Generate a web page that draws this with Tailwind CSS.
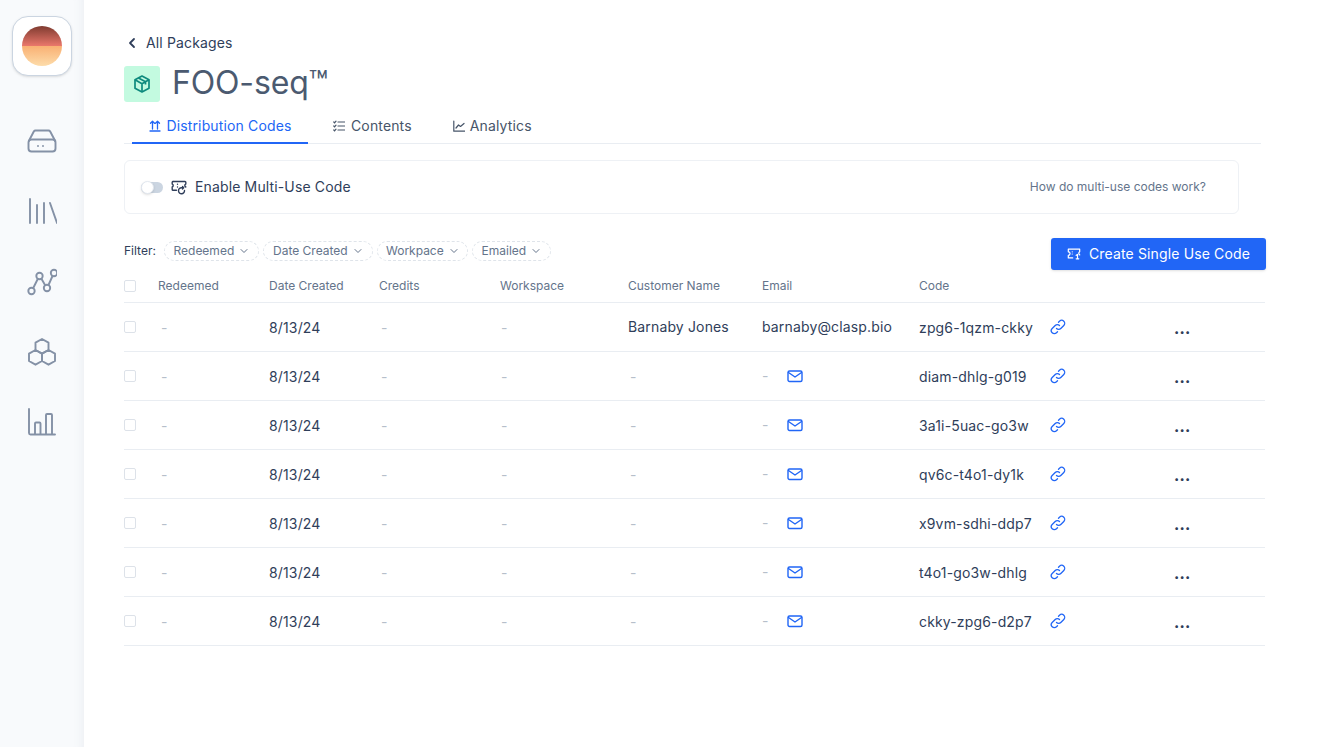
<!DOCTYPE html>
<html lang="en">
<head>
<meta charset="UTF-8">
<meta name="viewport" content="width=device-width, initial-scale=1.0">
<title>FOO-seq Distribution Codes</title>
<script src="https://cdn.jsdelivr.net/npm/@tailwindcss/browser@4"></script>
</head>
<body class="bg-white font-['Inter',sans-serif] text-[#2f3e5a] overflow-hidden">
<div class="flex h-[747px] w-[1320px]">

  <!-- sidebar -->
  <aside class="w-[84px] shrink-0 bg-[#f8fafc] shadow-[inset_-10px_0_10px_-8px_rgba(100,116,139,0.08)] flex flex-col items-center pt-4">
    <div class="w-[60px] h-[60px] rounded-[16px] bg-white border border-[#cbd5e1] shadow-sm flex items-center justify-center">
      <div class="w-10 h-10 rounded-full bg-[linear-gradient(#7f3b30_0%,#e8766a_49%,#f9b073_50%,#fddcaa_100%)]"></div>
    </div>
    <svg class="mt-[50px] w-[30px] h-[30px] text-[#8491a6]" viewBox="0 0 30 30" fill="none" stroke="currentColor" stroke-width="1.9" stroke-linecap="round" stroke-linejoin="round"><path d="M1.5 16.5v6a3 3 0 0 0 3 3h21a3 3 0 0 0 3-3v-6a3 3 0 0 0-3-3h-21a3 3 0 0 0-3 3z"/><path d="M1.8 15l5-9.500a2 2 0 0 1 1.800-1h12.800a2 2 0 0 1 1.800 1l5 9.500"/><path d="M11 20h.01M16 20h.01"/></svg>
    <svg class="mt-10 w-[30px] h-[30px] text-[#8491a6]" viewBox="0 0 30 30" fill="none" stroke="currentColor" stroke-width="1.9" stroke-linecap="round"><path d="M3 3v24M10 9v18M17 7v20M23 7l7 20"/></svg>
    <svg class="mt-10 w-[30px] h-[30px] text-[#8491a6]" viewBox="0 0 30 30" fill="none" stroke="currentColor" stroke-width="1.9"><circle cx="4.500" cy="25" r="3.200"/><circle cx="12.500" cy="10" r="3.200"/><circle cx="20" cy="22" r="3.200"/><circle cx="27" cy="7" r="3.200"/><path d="M6 22.500l5-10M14.300 12.500l4 7M21.500 19l4-9"/></svg>
    <svg class="mt-10 w-[30px] h-[30px] text-[#8491a6]" viewBox="0 0 30 30" fill="none" stroke="currentColor" stroke-width="1.900" stroke-linejoin="round"><path d="M15 3l6.500 3.700v7.300L15 17.700 8.500 14V6.700z"/><path d="M8.500 14l6.500 3.700v7.300l-6.500 3.700L2 25v-7.300z"/><path d="M21.500 14l6.500 3.700V25l-6.500 3.700L15 25v-7.300z"/></svg>
    <svg class="mt-10 w-[30px] h-[30px] text-[#8491a6]" viewBox="0 0 30 30" fill="none" stroke="currentColor" stroke-width="1.900" stroke-linecap="round" stroke-linejoin="round"><path d="M2 3v24a1.500 1.500 0 0 0 1.500 1.500H28"/><path d="M8 28V17.500a1 1 0 0 1 1-1h3.500a1 1 0 0 1 1 1V28"/><path d="M19 28V9a1 1 0 0 1 1-1h4a1 1 0 0 1 1 1v19"/></svg>
  </aside>

  <!-- main -->
  <main class="flex-1 pl-10 pt-[33px]">
    <a class="flex items-center h-5 text-sm tracking-[0.01em]">
      <svg class="w-4 h-4 mr-[6px]" viewBox="0 0 16 16" fill="none" stroke="currentColor" stroke-width="1.800" stroke-linecap="round" stroke-linejoin="round"><path d="M10 4L6 8l4 4"/></svg>
      All Packages
    </a>
    <div class="flex items-center mt-[13px] h-9">
      <div class="w-9 h-9 rounded-[3px] bg-[#c3fae0] flex items-center justify-center">
        <svg class="w-5 h-5 text-[#0f8a7e]" viewBox="0 0 20 20" fill="none" stroke="currentColor" stroke-width="1.700" stroke-linejoin="round"><path d="M10 2l7 3.800v8.400L10 18l-7-3.800V5.800z"/><path d="M3 5.800L10 9.700l7-3.900M10 9.700V18M6.500 3.900l7 3.900v2.700"/></svg>
      </div>
      <h1 class="ml-3 -mt-[2px] text-[32px] leading-9 tracking-[-0.005em] text-[#4b5a70]">FOO-seq™</h1>
    </div>

    <!-- tabs -->
    <div class="mt-[13px] w-[1137px] h-[29px] border-b border-[#e9edf2] flex items-start text-sm tracking-[0.01em]">
      <a class="ml-2 w-[176px] h-[29px] border-b-2 border-[#2166f6] text-[#2166f6] flex items-center justify-center gap-[5px] pl-px pb-[5px]">
        <svg class="w-3 h-3" viewBox="0 0 12 12" fill="none" stroke="currentColor" stroke-width="1.300" stroke-linecap="round" stroke-linejoin="round"><path d="M3.500 9V1.500M1.500 3.300L3.500 1.300l2 2M8.500 9V1.500M6.500 3.300l2-2 2 2M1 11h10"/></svg>
        Distribution Codes
      </a>
      <a class="ml-[25px] h-[28px] pb-[6px] text-[#475569] flex items-center gap-[6px]">
        <svg class="w-3 h-3" viewBox="0 0 12 12" fill="none" stroke="currentColor" stroke-width="1.200" stroke-linecap="round"><path d="M5 2h6.500M5 6h6.500M5 10h6.500M.8 2l.8.800L3 1.200M.8 6l.8.800L3 5.200M.8 10l.8.800L3 9.200"/></svg>
        Contents
      </a>
      <a class="ml-[41px] h-[28px] pb-[6px] text-[#475569] flex items-center gap-[5px]">
        <svg class="w-3 h-3" viewBox="0 0 12 12" fill="none" stroke="currentColor" stroke-width="1.200" stroke-linecap="round" stroke-linejoin="round"><path d="M.8 1v10.200H12M3 8l2.500-3 2 1.500L11 3.500"/></svg>
        Analytics
      </a>
    </div>

    <!-- multi-use panel -->
    <div class="mt-4 w-[1115px] h-[54px] rounded-md border border-[#eef1f5] flex items-center pl-4 pr-8">
      <span class="relative w-[22px] h-[11px] rounded-full bg-[#cbd5e1]">
        <span class="absolute left-0 top-[-1px] w-[13px] h-[13px] rounded-full bg-white border border-[#e2e8f0] shadow-sm"></span>
      </span>
      <svg class="ml-2 w-4 h-4" viewBox="0 0 16 16" fill="none" stroke="currentColor" stroke-width="1.400" stroke-linecap="round" stroke-linejoin="round"><path d="M2 2.500h12c.6 0 .8.400.8.800v1.700c-1.300.3-1.300 2.500 0 3"/><path d="M2 2.500c-.6 0-.8.400-.8.800v1.700c1.300.3 1.300 2.500 0 3v2.500c0 .5.300.8.800.8h3.500"/><path d="M6.500 5.200h.01M6.500 8h.01"/><path d="M13.500 11.500a3 3 0 1 1-3-2.800h2M11.500 7.500l1.200 1.200-1.200 1.200"/></svg>
      <span class="ml-2 text-sm tracking-[0.01em]">Enable Multi-Use Code</span>
      <a class="ml-auto text-xs text-[#64748b]">How do multi-use codes work?</a>
    </div>

    <!-- filters + action -->
    <div class="mt-[27px] w-[1142px] flex items-start justify-between">
      <div class="flex items-center gap-1 h-5 text-xs">
        <span class="mr-1">Filter:</span>
        <span class="w-[95px] h-5 rounded-full border border-dashed border-[#dfe4ea] text-[#64748b] flex items-center justify-center gap-[5px]">Redeemed <svg class="w-2.5 h-2.5" viewBox="0 0 10 10" fill="none" stroke="currentColor" stroke-width="1" stroke-linecap="round" stroke-linejoin="round"><path d="M2 3.500L5 6.500l3-3"/></svg></span>
        <span class="w-[110px] h-5 rounded-full border border-dashed border-[#dfe4ea] text-[#64748b] flex items-center justify-center gap-[5px]">Date Created <svg class="w-2.5 h-2.5" viewBox="0 0 10 10" fill="none" stroke="currentColor" stroke-width="1" stroke-linecap="round" stroke-linejoin="round"><path d="M2 3.500L5 6.500l3-3"/></svg></span>
        <span class="w-[91px] h-5 rounded-full border border-dashed border-[#dfe4ea] text-[#64748b] flex items-center justify-center gap-[5px]">Workpace <svg class="w-2.5 h-2.5" viewBox="0 0 10 10" fill="none" stroke="currentColor" stroke-width="1" stroke-linecap="round" stroke-linejoin="round"><path d="M2 3.500L5 6.500l3-3"/></svg></span>
        <span class="w-[79px] h-5 rounded-full border border-dashed border-[#dfe4ea] text-[#64748b] flex items-center justify-center gap-[5px]">Emailed <svg class="w-2.5 h-2.5" viewBox="0 0 10 10" fill="none" stroke="currentColor" stroke-width="1" stroke-linecap="round" stroke-linejoin="round"><path d="M2 3.500L5 6.500l3-3"/></svg></span>
      </div>
      <button class="w-[215px] h-8 -mt-[3px] rounded-[3px] bg-[#2166f6] text-white text-sm tracking-[0.01em] shadow-sm flex items-center justify-center gap-2">
        <svg class="w-[14px] h-[14px]" viewBox="0 0 16 16" fill="none" stroke="currentColor" stroke-width="1.400" stroke-linecap="round" stroke-linejoin="round"><path d="M1.500 2.500h13v3a2 2 0 0 0 0 3.500M1.500 2.500v3a2 2 0 0 1 0 4v3h5"/><path d="M6 5.500h.01M6 8h.01M10.500 9.500l1.500-1v5M10.500 13.500h3"/></svg>
        Create Single Use Code
      </button>
    </div>

    <!-- table -->
    <div class="w-[1141px]">
      <div class="grid grid-cols-[34px_111px_110px_121px_128px_134px_157px_132px_123px_91px] items-center h-[33px] border-b border-[#e9edf2] text-xs text-[#64748b]">
        <span class="w-3 h-3 rounded-[2px] border border-[#dde2e9]"></span>
        <span>Redeemed</span><span>Date Created</span><span>Credits</span><span>Workspace</span><span>Customer Name</span><span>Email</span><span>Code</span><span></span><span></span>
      </div>

      <div class="grid grid-cols-[34px_111px_110px_121px_128px_134px_157px_132px_123px_91px] items-center h-[49px] border-b border-[#e9edf2] text-sm tracking-[0.15px]">
        <span class="w-3 h-3 rounded-[2px] border border-[#dde2e9]"></span>
        <span class="pl-[3px] pt-px text-[#b6bfcb]">-</span><span class="pt-px">8/13/24</span><span class="pl-[2px] pt-px text-[#b6bfcb]">-</span><span class="pl-px pt-px text-[#b6bfcb]">-</span>
        <span class="-mt-px">Barnaby Jones</span><span class="-mt-px">barnaby@clasp.bio</span><span class="pt-px">zpg6-1qzm-ckky</span>
        <svg class="-ml-px w-4 h-4 text-[#2166f6]" viewBox="0 0 16 16" fill="none" stroke="currentColor" stroke-width="1.300" stroke-linecap="round" stroke-linejoin="round"><path d="M6.500 9.500a3 3 0 0 0 4.300 0l3-3a3 3 0 0 0-4.300-4.300l-1 1"/><path d="M9.500 6.500a3 3 0 0 0-4.300 0l-3 3a3 3 0 0 0 4.300 4.300l1-1"/></svg>
        <span class="font-extrabold text-[15px] pt-1">...</span>
      </div>

      <div class="grid grid-cols-[34px_111px_110px_121px_128px_134px_157px_132px_123px_91px] items-center h-[49px] border-b border-[#e9edf2] text-sm tracking-[0.15px]">
        <span class="w-3 h-3 rounded-[2px] border border-[#dde2e9]"></span>
        <span class="pl-[3px] pt-px text-[#b6bfcb]">-</span><span class="pt-px">8/13/24</span><span class="pl-[2px] pt-px text-[#b6bfcb]">-</span><span class="pl-px pt-px text-[#b6bfcb]">-</span><span class="pl-[2px] pt-px text-[#b6bfcb]">-</span>
        <span class="flex items-center text-[#b6bfcb]">-<svg class="ml-[18px] w-4 h-4 text-[#2166f6]" viewBox="0 0 16 16" fill="none" stroke="currentColor" stroke-width="1.400" stroke-linecap="round" stroke-linejoin="round"><rect x="1" y="3" width="14" height="10.500" rx="1.500"/><path d="M1.500 4.500L8 9l6.500-4.500"/></svg></span>
        <span class="pt-px">diam-dhlg-g019</span>
        <svg class="-ml-px w-4 h-4 text-[#2166f6]" viewBox="0 0 16 16" fill="none" stroke="currentColor" stroke-width="1.300" stroke-linecap="round" stroke-linejoin="round"><path d="M6.500 9.500a3 3 0 0 0 4.300 0l3-3a3 3 0 0 0-4.300-4.300l-1 1"/><path d="M9.500 6.500a3 3 0 0 0-4.300 0l-3 3a3 3 0 0 0 4.300 4.300l1-1"/></svg>
        <span class="font-extrabold text-[15px] pt-1">...</span>
      </div>

      <div class="grid grid-cols-[34px_111px_110px_121px_128px_134px_157px_132px_123px_91px] items-center h-[49px] border-b border-[#e9edf2] text-sm tracking-[0.15px]">
        <span class="w-3 h-3 rounded-[2px] border border-[#dde2e9]"></span>
        <span class="pl-[3px] pt-px text-[#b6bfcb]">-</span><span class="pt-px">8/13/24</span><span class="pl-[2px] pt-px text-[#b6bfcb]">-</span><span class="pl-px pt-px text-[#b6bfcb]">-</span><span class="pl-[2px] pt-px text-[#b6bfcb]">-</span>
        <span class="flex items-center text-[#b6bfcb]">-<svg class="ml-[18px] w-4 h-4 text-[#2166f6]" viewBox="0 0 16 16" fill="none" stroke="currentColor" stroke-width="1.400" stroke-linecap="round" stroke-linejoin="round"><rect x="1" y="3" width="14" height="10.500" rx="1.500"/><path d="M1.500 4.500L8 9l6.500-4.500"/></svg></span>
        <span class="pt-px">3a1i-5uac-go3w</span>
        <svg class="-ml-px w-4 h-4 text-[#2166f6]" viewBox="0 0 16 16" fill="none" stroke="currentColor" stroke-width="1.300" stroke-linecap="round" stroke-linejoin="round"><path d="M6.500 9.500a3 3 0 0 0 4.300 0l3-3a3 3 0 0 0-4.300-4.300l-1 1"/><path d="M9.500 6.500a3 3 0 0 0-4.300 0l-3 3a3 3 0 0 0 4.300 4.300l1-1"/></svg>
        <span class="font-extrabold text-[15px] pt-1">...</span>
      </div>

      <div class="grid grid-cols-[34px_111px_110px_121px_128px_134px_157px_132px_123px_91px] items-center h-[49px] border-b border-[#e9edf2] text-sm tracking-[0.15px]">
        <span class="w-3 h-3 rounded-[2px] border border-[#dde2e9]"></span>
        <span class="pl-[3px] pt-px text-[#b6bfcb]">-</span><span class="pt-px">8/13/24</span><span class="pl-[2px] pt-px text-[#b6bfcb]">-</span><span class="pl-px pt-px text-[#b6bfcb]">-</span><span class="pl-[2px] pt-px text-[#b6bfcb]">-</span>
        <span class="flex items-center text-[#b6bfcb]">-<svg class="ml-[18px] w-4 h-4 text-[#2166f6]" viewBox="0 0 16 16" fill="none" stroke="currentColor" stroke-width="1.400" stroke-linecap="round" stroke-linejoin="round"><rect x="1" y="3" width="14" height="10.500" rx="1.500"/><path d="M1.500 4.500L8 9l6.500-4.500"/></svg></span>
        <span class="pt-px">qv6c-t4o1-dy1k</span>
        <svg class="-ml-px w-4 h-4 text-[#2166f6]" viewBox="0 0 16 16" fill="none" stroke="currentColor" stroke-width="1.300" stroke-linecap="round" stroke-linejoin="round"><path d="M6.500 9.500a3 3 0 0 0 4.300 0l3-3a3 3 0 0 0-4.300-4.300l-1 1"/><path d="M9.500 6.500a3 3 0 0 0-4.300 0l-3 3a3 3 0 0 0 4.300 4.300l1-1"/></svg>
        <span class="font-extrabold text-[15px] pt-1">...</span>
      </div>

      <div class="grid grid-cols-[34px_111px_110px_121px_128px_134px_157px_132px_123px_91px] items-center h-[49px] border-b border-[#e9edf2] text-sm tracking-[0.15px]">
        <span class="w-3 h-3 rounded-[2px] border border-[#dde2e9]"></span>
        <span class="pl-[3px] pt-px text-[#b6bfcb]">-</span><span class="pt-px">8/13/24</span><span class="pl-[2px] pt-px text-[#b6bfcb]">-</span><span class="pl-px pt-px text-[#b6bfcb]">-</span><span class="pl-[2px] pt-px text-[#b6bfcb]">-</span>
        <span class="flex items-center text-[#b6bfcb]">-<svg class="ml-[18px] w-4 h-4 text-[#2166f6]" viewBox="0 0 16 16" fill="none" stroke="currentColor" stroke-width="1.400" stroke-linecap="round" stroke-linejoin="round"><rect x="1" y="3" width="14" height="10.500" rx="1.500"/><path d="M1.500 4.500L8 9l6.500-4.500"/></svg></span>
        <span class="pt-px">x9vm-sdhi-ddp7</span>
        <svg class="-ml-px w-4 h-4 text-[#2166f6]" viewBox="0 0 16 16" fill="none" stroke="currentColor" stroke-width="1.300" stroke-linecap="round" stroke-linejoin="round"><path d="M6.500 9.500a3 3 0 0 0 4.300 0l3-3a3 3 0 0 0-4.300-4.300l-1 1"/><path d="M9.500 6.500a3 3 0 0 0-4.300 0l-3 3a3 3 0 0 0 4.300 4.300l1-1"/></svg>
        <span class="font-extrabold text-[15px] pt-1">...</span>
      </div>

      <div class="grid grid-cols-[34px_111px_110px_121px_128px_134px_157px_132px_123px_91px] items-center h-[49px] border-b border-[#e9edf2] text-sm tracking-[0.15px]">
        <span class="w-3 h-3 rounded-[2px] border border-[#dde2e9]"></span>
        <span class="pl-[3px] pt-px text-[#b6bfcb]">-</span><span class="pt-px">8/13/24</span><span class="pl-[2px] pt-px text-[#b6bfcb]">-</span><span class="pl-px pt-px text-[#b6bfcb]">-</span><span class="pl-[2px] pt-px text-[#b6bfcb]">-</span>
        <span class="flex items-center text-[#b6bfcb]">-<svg class="ml-[18px] w-4 h-4 text-[#2166f6]" viewBox="0 0 16 16" fill="none" stroke="currentColor" stroke-width="1.400" stroke-linecap="round" stroke-linejoin="round"><rect x="1" y="3" width="14" height="10.500" rx="1.500"/><path d="M1.500 4.500L8 9l6.500-4.500"/></svg></span>
        <span class="pt-px">t4o1-go3w-dhlg</span>
        <svg class="-ml-px w-4 h-4 text-[#2166f6]" viewBox="0 0 16 16" fill="none" stroke="currentColor" stroke-width="1.300" stroke-linecap="round" stroke-linejoin="round"><path d="M6.500 9.500a3 3 0 0 0 4.300 0l3-3a3 3 0 0 0-4.300-4.300l-1 1"/><path d="M9.500 6.500a3 3 0 0 0-4.300 0l-3 3a3 3 0 0 0 4.300 4.300l1-1"/></svg>
        <span class="font-extrabold text-[15px] pt-1">...</span>
      </div>

      <div class="grid grid-cols-[34px_111px_110px_121px_128px_134px_157px_132px_123px_91px] items-center h-[49px] border-b border-[#e9edf2] text-sm tracking-[0.15px]">
        <span class="w-3 h-3 rounded-[2px] border border-[#dde2e9]"></span>
        <span class="pl-[3px] pt-px text-[#b6bfcb]">-</span><span class="pt-px">8/13/24</span><span class="pl-[2px] pt-px text-[#b6bfcb]">-</span><span class="pl-px pt-px text-[#b6bfcb]">-</span><span class="pl-[2px] pt-px text-[#b6bfcb]">-</span>
        <span class="flex items-center text-[#b6bfcb]">-<svg class="ml-[18px] w-4 h-4 text-[#2166f6]" viewBox="0 0 16 16" fill="none" stroke="currentColor" stroke-width="1.400" stroke-linecap="round" stroke-linejoin="round"><rect x="1" y="3" width="14" height="10.500" rx="1.500"/><path d="M1.500 4.500L8 9l6.500-4.500"/></svg></span>
        <span class="pt-px">ckky-zpg6-d2p7</span>
        <svg class="-ml-px w-4 h-4 text-[#2166f6]" viewBox="0 0 16 16" fill="none" stroke="currentColor" stroke-width="1.300" stroke-linecap="round" stroke-linejoin="round"><path d="M6.500 9.500a3 3 0 0 0 4.300 0l3-3a3 3 0 0 0-4.300-4.300l-1 1"/><path d="M9.500 6.500a3 3 0 0 0-4.300 0l-3 3a3 3 0 0 0 4.300 4.300l1-1"/></svg>
        <span class="font-extrabold text-[15px] pt-1">...</span>
      </div>
    </div>
  </main>
</div>
</body>
</html>
